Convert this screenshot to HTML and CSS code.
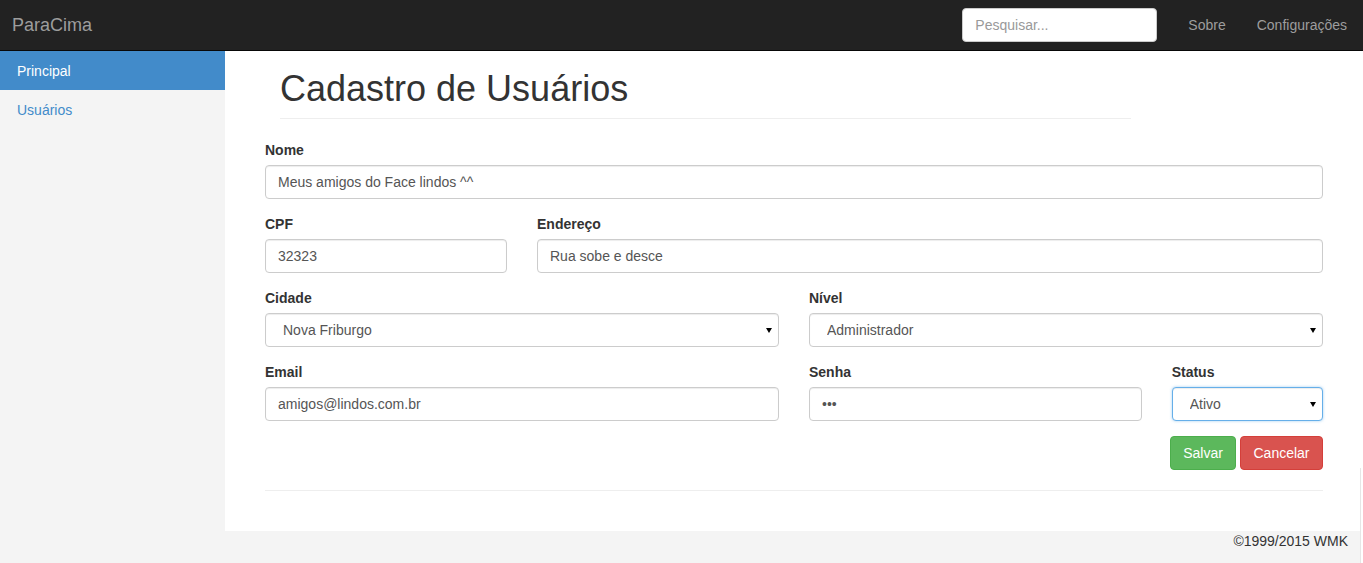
FILE: index.html
```html
<!DOCTYPE html>
<html lang="pt-BR">
<head>
<meta charset="utf-8">
<title>ParaCima - Cadastro de Usuários</title>
<link rel="stylesheet" href="styles.css">
</head>
<body>
<header class="navbar">
  <a class="brand" href="#">ParaCima</a>
  <form class="nav-search">
    <input type="text" class="search-input" placeholder="Pesquisar...">
  </form>
  <ul class="nav-links">
    <li><a href="#">Sobre</a></li>
    <li><a href="#">Configurações</a></li>
  </ul>
</header>
<div class="layout">
  <aside class="sidebar">
    <ul class="side-nav">
      <li><a class="side-link active" href="#">Principal</a></li>
      <li><a class="side-link" href="#">Usuários</a></li>
    </ul>
  </aside>
  <div class="content-col">
    <main class="main">
      <h1 class="page-header">Cadastro de Usuários</h1>
      <form class="user-form">
        <div class="row">
          <div class="form-group span-12">
            <label>Nome</label>
            <input class="form-control" type="text" value="Meus amigos do Face lindos ^^">
          </div>
        </div>
        <div class="row">
          <div class="form-group span-3">
            <label>CPF</label>
            <input class="form-control" type="text" value="32323">
          </div>
          <div class="form-group span-9">
            <label>Endereço</label>
            <input class="form-control" type="text" value="Rua sobe e desce">
          </div>
        </div>
        <div class="row">
          <div class="form-group span-6">
            <label>Cidade</label>
            <div class="select-wrap">
              <select class="form-control select"><option>Nova Friburgo</option></select>
            </div>
          </div>
          <div class="form-group span-6">
            <label>Nível</label>
            <div class="select-wrap">
              <select class="form-control select"><option>Administrador</option></select>
            </div>
          </div>
        </div>
        <div class="row">
          <div class="form-group span-6">
            <label>Email</label>
            <input class="form-control" type="text" value="amigos@lindos.com.br">
          </div>
          <div class="form-group span-4">
            <label>Senha</label>
            <input class="form-control" type="password" value="abc">
          </div>
          <div class="form-group span-2">
            <label>Status</label>
            <div class="select-wrap">
              <select class="form-control select focused"><option>Ativo</option></select>
            </div>
          </div>
        </div>
        <div class="actions">
          <button type="button" class="btn btn-success">Salvar</button>
          <button type="button" class="btn btn-danger">Cancelar</button>
        </div>
        <hr class="divider">
      </form>
    </main>
    <footer class="footer">©1999/2015 WMK</footer>
  </div>
</div>
<div class="edge-shadow"></div>
</body>
</html>
```
FILE: styles.css
```css
* { box-sizing: border-box; }
html, body { height: 100%; }
body {
  margin: 0;
  font-family: "Liberation Sans", Arial, sans-serif;
  font-size: 14px;
  line-height: 20px;
  color: #333;
  background: #f4f4f4;
  overflow: hidden;
}
a { text-decoration: none; }

.navbar {
  display: flex;
  align-items: flex-start;
  height: 51px;
  background: #222;
  border-bottom: 1px solid #080808;
}
.brand {
  padding: 15px 12px;
  font-size: 18px;
  line-height: 20px;
  color: #9d9d9d;
}
.nav-search { margin: 8px 15px 0 auto; }
.search-input {
  width: 195px;
  height: 34px;
  padding: 6px 12px;
  border: 1px solid #ccc;
  border-radius: 4px;
  font: 14px "Liberation Sans", Arial, sans-serif;
  color: #555;
  background: #fff;
}
.search-input::placeholder { color: #999; }
.nav-links { display: flex; list-style: none; margin: 0 1px 0 0; padding: 0; }
.nav-links a {
  display: block;
  padding: 15px 15px 15px 16px;
  line-height: 20px;
  color: #9d9d9d;
}

.layout { display: flex; height: calc(100% - 51px); }
.sidebar { width: 225px; flex: none; background: #f4f4f4; }
.side-nav { list-style: none; margin: 0; padding: 0; }
.side-link {
  display: block;
  padding: 10px 17px 9px;
  line-height: 20px;
  color: #428bca;
}
.side-link.active { background: #428bca; color: #fff; }

.content-col { flex: 1; display: flex; flex-direction: column; }
.main { background: #fff; padding: 18px 40px 40px; }
.page-header {
  width: 851px;
  margin: 0 0 21px 15px;
  padding-bottom: 9px;
  border-bottom: 1px solid #eee;
  font-size: 36px;
  font-weight: 500;
  line-height: 39.6px;
  color: #333;
}

.row { display: grid; grid-template-columns: repeat(12, 1fr); column-gap: 30px; }
.span-12 { grid-column: span 12; }
.span-9 { grid-column: span 9; }
.span-6 { grid-column: span 6; }
.span-4 { grid-column: span 4; }
.span-3 { grid-column: span 3; }
.span-2 { grid-column: span 2; }
.form-group { margin-bottom: 15px; min-width: 0; }
.form-group label {
  display: block;
  margin-bottom: 5px;
  font-weight: bold;
  line-height: 20px;
}
.form-control {
  display: block;
  width: 100%;
  height: 34px;
  padding: 6px 12px;
  border: 1px solid #ccc;
  border-radius: 4px;
  background: #fff;
  font: 14px "Liberation Sans", Arial, sans-serif;
  color: #555;
  box-shadow: inset 0 1px 1px rgba(0,0,0,.075);
  outline: none;
}
.select { appearance: none; -webkit-appearance: none; padding-left: 17px; }
.select.focused {
  border-color: #66afe9;
  box-shadow: inset 0 1px 1px rgba(0,0,0,.075), 0 0 3px rgba(102,175,233,.6);
}
.select-wrap { position: relative; }
.select-wrap::after {
  content: "";
  position: absolute;
  right: 7px;
  top: 50%;
  margin-top: -2px;
  border-left: 3px solid transparent;
  border-right: 3px solid transparent;
  border-top: 5px solid #000;
  pointer-events: none;
}

.actions { display: flex; justify-content: flex-end; gap: 4px; }
.btn {
  height: 34px;
  padding: 6px 0;
  border: 1px solid transparent;
  border-radius: 4px;
  font: 14px "Liberation Sans", Arial, sans-serif;
  line-height: 20px;
  color: #fff;
  text-align: center;
}
.btn-success { width: 66px; background: #5cb85c; border-color: #4cae4c; }
.btn-danger { width: 83px; background: #d9534f; border-color: #d43f3a; }
.divider { margin: 20px 0 0; border: 0; border-top: 1px solid #eee; }

.footer {
  padding: 0 15px;
  line-height: 20px;
  text-align: right;
  color: #333;
}

.edge-shadow {
  position: absolute;
  left: 1360px;
  top: 468px;
  width: 3px;
  height: 95px;
  border-left: 1px solid #e6e6e6;
  background: #fff;
}
```
